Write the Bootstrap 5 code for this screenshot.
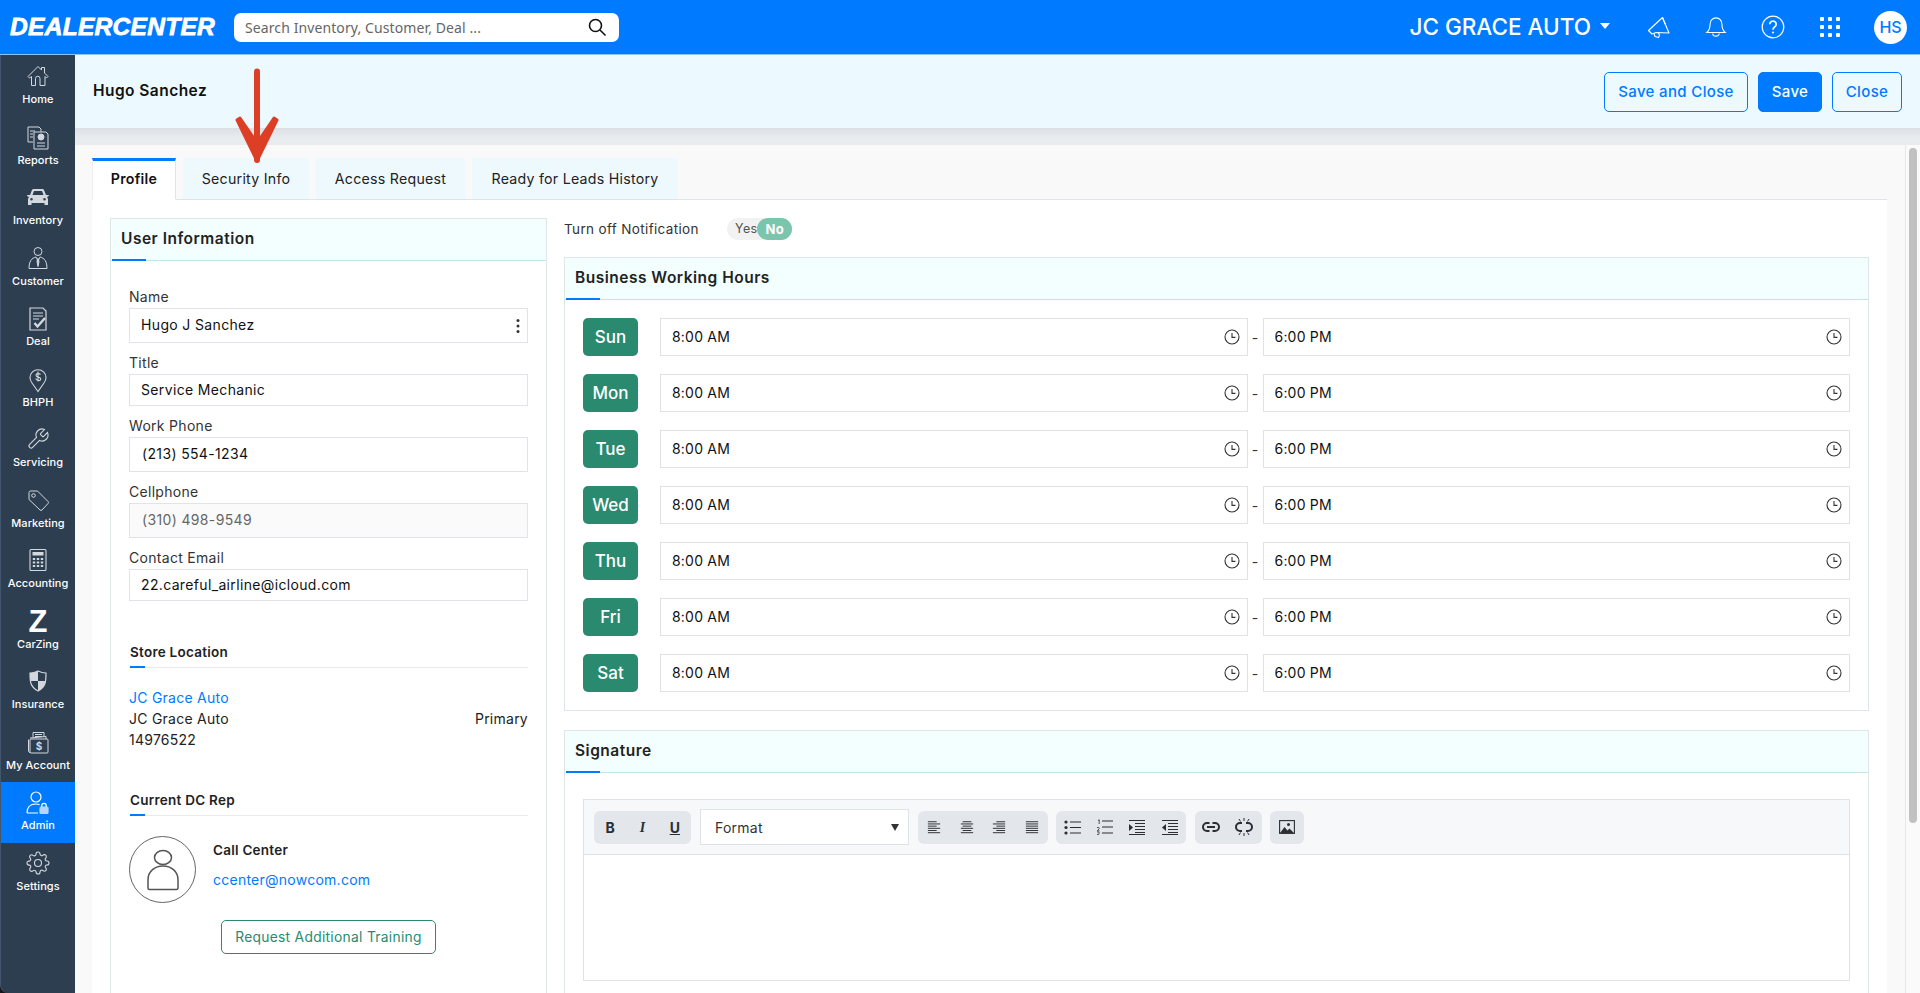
<!doctype html>
<html lang="en">
<head>
<meta charset="utf-8">
<meta name="viewport" content="width=device-width, initial-scale=1">
<title>DealerCenter - User Profile</title>
<link href="https://cdn.jsdelivr.net/npm/bootstrap@5.3.0/dist/css/bootstrap.min.css" rel="stylesheet">
<style>
  html, body { height: 100%; overflow: hidden; }
  body { font-family: Inter, "Noto Sans", sans-serif; font-size: 14px; letter-spacing: .25px; color: #222; background: #f9f9f9; }

  /* top bar */
  .top-bar { height: 55px; background: #007aff; border-bottom: 1px solid #8cc4ff; flex: none; padding: 0 13px 0 10px; }
  .brand-text { font-family: "Liberation Sans", sans-serif; font-weight: 700; font-style: italic; font-size: 24.5px; letter-spacing: .3px; color: #fff; width: 224px; -webkit-text-stroke: .8px #fff; padding: 0; margin: 0; }
  .brand-text:hover { color: #fff; }
  .top-search { width: 385px; height: 29px; background: #fff; border-radius: 7px; padding: 0 12px 0 11px; }
  .top-search span { font-family: "Noto Sans", sans-serif; font-size: 14px; letter-spacing: .1px; color: #666; }
  .store-name { font-size: 22.5px; font-weight: 500; letter-spacing: 0; color: #fff; margin-right: 9px; }
  .store-caret { width: 0; height: 0; border-left: 5px solid transparent; border-right: 5px solid transparent; border-top: 6px solid #fff; margin-right: 36px; margin-top: -3px; }
  .top-ico { width: 26px; display: flex; justify-content: center; color: #fff; margin-right: 31px; }
  .top-avatar { width: 33px; height: 33px; border-radius: 50%; background: #fff; color: #007aff; font-size: 16px; font-weight: 500; letter-spacing: 0; }

  /* side menu */
  .main-row { background: #15191e; }
  .side-menu { width: 75px; background: #2d3e50; border-left: 1px solid #42576d; border-bottom-left-radius: 8px; flex: none; padding-top: 1px; }
  .side-item { height: 60.5px; padding-top: 8px; color: #fff; text-decoration: none; font-size: 11px; font-weight: 500; letter-spacing: .05px; line-height: 14px; }
  .side-item:hover { color: #fff; }
  .side-item svg { color: #d3d8de; }
  .side-item.is-active { background: #007aff; }
  .side-item.is-active svg { color: #fff; }
  .side-ico { height: 26px; margin-bottom: 2px; }
  .zing-mark { font-size: 31px; font-weight: 900; line-height: 26px; color: #fff; font-family: "Liberation Sans", sans-serif; }

  /* title strip */
  .work-col { background: #f9f9f9; }
  .title-strip { height: 73px; background: #ecf9ff; padding: 0 18px 0 18px; flex: none; position: relative; z-index: 1; }
  .title-strip h1 { font-size: 15.5px; font-weight: 600; margin: 0; letter-spacing: .45px; color: #111; }
  .shade-strip { height: 17px; flex: none; background: linear-gradient(#dcdfe4, #e9ecef 60%); }
  .act-row { gap: 10px; }
  .act-btn { height: 40px; font-size: 15px; font-weight: 500; border-radius: 5px; padding: 1px 0 0; color: #007aff; border: 1px solid #007aff; letter-spacing: .35px; }
  .act-save-close { width: 144px; }
  .act-save { width: 64px; background: #007aff; color: #fff; }
  .act-close { width: 70px; }

  /* scrolling page */
  .page-scroll { flex: 1; overflow: hidden; padding: 13px 18px 16px 17px; }
  .scroll-rail { width: 15px; flex: none; background: #fafafa; border-left: 1px solid #e8e8e8; padding: 3px 3px 0 3px; }
  .scroll-thumb { height: 675px; background: #c1c1c1; border-radius: 4px; }

  .tab-row { border-bottom: 1px solid #e0e3e8; gap: 7px; }
  .tab-row .nav-link { height: 42px; margin-bottom: -1px; padding: 0 0 2px; border: 0; border-top: 3px solid transparent; border-radius: 0; background: #eef9fe; color: #222; font-size: 14.2px; border-bottom: 1px solid #e0e3e8; }
  .tab-row .nav-link.active { background: #fff; color: #111; font-weight: 600; border-top-color: #007aff; border-bottom-color: #fff; border-left: 1px solid #eee; border-right: 1px solid #e0e3e8; }
  .tab-profile { width: 84px; }
  .tab-security { width: 126px; }
  .tab-access { width: 149px; }
  .tab-leads { width: 206px; }
  .tab-body { background: #fff; padding: 18px 18px 15px 18px; }
  .profile-grid { display: grid; grid-template-columns: 437px 1fr; gap: 17px; }

  /* panels */
  .panel { border: 1px solid #dfe6e8; border-radius: 0; }
  .panel-head { height: 42px; background: #f3fffe; border-bottom: 1px solid #c3e6e2; padding: 0 0 1px 10px; font-size: 15.5px; font-weight: 600; letter-spacing: .5px; color: #222; position: relative; border-radius: 0 !important; }
  .panel-head::after { content: ""; position: absolute; left: 1px; bottom: -1px; width: 34px; height: 2px; background: #007aff; }
  .left-body { padding: 26px 18px 240px 18px; }

  .fld { margin-bottom: 10px; }
  .fld label { display: block; height: 20px; line-height: 20px; margin-bottom: 1px; font-size: 14px; color: #333; letter-spacing: .3px; }
  .fld-input { height: 35px; border-radius: 0; border: 1px solid #e0e3e8; color: #111; font-size: 14px; letter-spacing: .35px; padding: 0 11px 2px; }
  .fld-input.is-short { height: 32px; }
  .fld-input.is-phone { padding-left: 12px; }
  .fld-input:disabled { background: #fafafa; color: #666; opacity: 1; }
  .kebab { position: absolute; right: 8px; top: 50%; transform: translateY(-50%); }

  .sub-head { font-size: 13.5px; font-weight: 600; color: #222; height: 26px; line-height: 20px; border-bottom: 1px solid #e9ecef; position: relative; padding-left: 1px; }
  .sub-head::after { content: ""; position: absolute; left: 1px; bottom: -1px; width: 15px; height: 2px; background: #007aff; }
  .store-head { margin-top: 41px; }
  .store-block { margin: 19px 0 40px; line-height: 21px; font-size: 14px; color: #222; }
  .blue-link { color: #007aff; text-decoration: none; }
  .rep-block { margin-top: 20px; }
  .rep-photo { width: 67px; height: 67px; border: 1px solid #666; border-radius: 50%; flex: none; margin-right: 17px; color: #555; }
  .rep-name { font-size: 13.5px; font-weight: 600; margin: 5px 0 10px; line-height: 18px; }
  .rep-mail { font-size: 14px; line-height: 20px; }
  .train-btn { width: 215px; height: 34px; margin: 17px auto 0; padding: 0; display: block; font-size: 13.8px; color: #2a8a70; border: 1px solid #2a8a70; border-radius: 5px; letter-spacing: .3px; }

  .notify-row { height: 22px; margin-bottom: 17px; font-size: 13.5px; color: #333; letter-spacing: .35px; }
  .notify-row > span { width: 163px; }
  .yes-no { width: 65px; height: 22px; border-radius: 11px; background: #f2f2f2; font-size: 12.5px; color: #555; padding-left: 8px; }
  .yes-no b { width: 36px; height: 22px; border-radius: 11px; background: #7cc5ad; color: #fff; margin-left: auto; font-size: 13px; font-weight: 700; text-align: center; line-height: 22px; }

  .hours-body { padding: 18px 18px 0 18px; }
  .hours-row { margin-bottom: 18px; }
  .day-tag { width: 55px; height: 38px; flex: none; margin-right: 22px; padding-top: 1px; background: #2a8a70; color: #fff; border-radius: 5px; font-size: 17px; font-weight: 500; letter-spacing: 0; }
  .time-box { flex: 1; }
  .time-box .form-control { height: 38px; border-radius: 0; border: 1px solid #e2e2e2; padding: 0 11px 1px; font-size: 14px; color: #111; letter-spacing: .2px; }
  .time-clock { position: absolute; right: 8px; top: 11px; color: #333; }
  .time-dash { width: 15px; text-align: center; color: #333; }

  .sign-panel { margin-top: 19px; }
  .sign-body { padding: 26px 18px 20px 18px; }
  .edit-box { border: 1px solid #dfe2e6; height: 182px; }
  .edit-tools { height: 55px; background: #f7f8fa; border-bottom: 1px solid #dfe2e6; padding: 0 10px; }
  .tool-set { height: 33px; background: #e3e6ea; border-radius: 6px; color: #2a2f35; }
  .tool-set > span { width: 32.5px; text-align: center; display: flex; justify-content: center; align-items: center; font-size: 14px; font-weight: 700; letter-spacing: 0; }
  .set-a { width: 97px; margin-right: 9px; }
  .set-b { width: 130px; margin-right: 8px; }
  .set-c { width: 130px; margin-right: 9px; }
  .set-d { width: 67px; margin-right: 8px; }
  .set-e { width: 34px; }
  .fmt-select { width: 209px; height: 36px; background: #fff; border: 1px solid #dfe2e6; margin-right: 9px; padding: 0 9px 0 14px; font-size: 14px; color: #333; }
  .fmt-caret { width: 0; height: 0; border-left: 4.5px solid transparent; border-right: 4.5px solid transparent; border-top: 7px solid #333; }
  .ital-i { font-family: "Liberation Serif", serif; font-style: italic; font-size: 16px; font-weight: 400; }
  .under-u { text-decoration: underline; }

  /* annotation drawn on top of the screenshot */
  .note-arrow { position: absolute; left: 232px; top: 68px; z-index: 5; pointer-events: none; }
</style>
</head>
<body>
<svg width="0" height="0" class="position-absolute">
  <symbol id="i-clock" viewBox="0 0 16 16"><circle cx="8" cy="8" r="7" fill="none" stroke="currentColor" stroke-width="1.1"/><path d="M8 4v4.4h3.4" fill="none" stroke="currentColor" stroke-width="1.1"/></symbol>
  <symbol id="i-lines-l" viewBox="0 0 16 16"><path d="M1 2h10M1 4.500h14M1 7h10M1 9.500h14M1 12h10M1 14.500h14" stroke="currentColor" stroke-width="1.100" fill="none"/></symbol>
  <symbol id="i-lines-c" viewBox="0 0 16 16"><path d="M3 2h10M1 4.500h14M3 7h10M1 9.500h14M3 12h10M1 14.500h14" stroke="currentColor" stroke-width="1.100" fill="none"/></symbol>
  <symbol id="i-lines-r" viewBox="0 0 16 16"><path d="M5 2h10M1 4.500h14M5 7h10M1 9.500h14M5 12h10M1 14.500h14" stroke="currentColor" stroke-width="1.100" fill="none"/></symbol>
  <symbol id="i-lines-j" viewBox="0 0 16 16"><path d="M1 2h14M1 4.500h14M1 7h14M1 9.500h14M1 12h14M1 14.500h14" stroke="currentColor" stroke-width="1.100" fill="none"/></symbol>
</svg>

<div class="d-flex flex-column h-100">
  <!-- Top bar -->
  <nav class="navbar top-bar d-flex flex-nowrap align-items-center justify-content-start">
    <a class="navbar-brand brand-text" href="#">DEALERCENTER</a>
    <div class="top-search d-flex align-items-center justify-content-between">
      <span>Search Inventory, Customer, Deal ...</span>
      <svg width="20" height="20" viewBox="0 0 20 20" fill="none" stroke="#111" stroke-width="1.600"><circle cx="8.500" cy="8.500" r="6"/><path d="M13 13l5.500 5.500"/></svg>
    </div>
    <div class="ms-auto d-flex align-items-center">
      <span class="store-name">JC GRACE AUTO</span>
      <span class="store-caret"></span>
      <span class="top-ico"><svg width="24" height="24" viewBox="0 0 24 24" fill="none" stroke="currentColor" stroke-width="1.100" stroke-linejoin="round"><path d="M1.500 15.500L15.500 2.500 22 18 9 17.500 5 19z"/><path d="M15.500 2.500c1 3 2 5 3 7M7 18.500l1 3 3.500 1 1-2-1-3"/></svg></span>
      <span class="top-ico"><svg width="22" height="24" viewBox="0 0 24 24" fill="none" stroke="currentColor" stroke-width="1.200"><path d="M18.500 9A6.500 7 0 0 0 5.500 9c0 6-3.500 9-3.500 9h20s-3.500-3-3.500-9"/><path d="M8.500 19a3.500 3 0 0 0 7 0"/></svg></span>
      <span class="top-ico"><svg width="24" height="24" viewBox="0 0 24 24" fill="none" stroke="currentColor" stroke-width="1.200"><circle cx="12" cy="12" r="10.800"/><path d="M8.800 9.200a3.200 3.200 0 1 1 4.800 2.800c-1 .6-1.600 1.200-1.600 2.800" stroke-width="1.700"/><circle cx="12" cy="17.600" r="1" fill="currentColor" stroke="none"/></svg></span>
      <span class="top-ico"><svg width="22" height="22" viewBox="0 0 22 22" fill="currentColor"><rect x="1" y="1" width="4" height="4" rx="1"/><rect x="9" y="1" width="4" height="4" rx="1"/><rect x="17" y="1" width="4" height="4" rx="1"/><rect x="1" y="9" width="4" height="4" rx="1"/><rect x="9" y="9" width="4" height="4" rx="1"/><rect x="17" y="9" width="4" height="4" rx="1"/><rect x="1" y="17" width="4" height="4" rx="1"/><rect x="9" y="17" width="4" height="4" rx="1"/><rect x="17" y="17" width="4" height="4" rx="1"/></svg></span>
      <span class="top-avatar d-flex align-items-center justify-content-center">HS</span>
    </div>
  </nav>

  <div class="main-row d-flex flex-grow-1 overflow-hidden position-relative">
    <!-- Side menu -->
    <div class="side-menu">
      <a class="side-item d-flex flex-column align-items-center" href="#"><span class="side-ico"><svg width="24" height="24" viewBox="0 0 24 24" fill="none" stroke="currentColor" stroke-width="1"><path d="M2 12.500L12 2.500l3.500 3.500V3.500h3V9l3.500 3.500-1.500 1.500-1.500-1.500V21.500h-5v-7a2 2 0 0 0-4.500 0v7H5.500V12.500L3.500 14z"/></svg></span>Home</a>
      <a class="side-item d-flex flex-column align-items-center" href="#"><span class="side-ico"><svg width="24" height="26" viewBox="0 0 24 26" fill="none" stroke="currentColor" stroke-width="1"><path d="M2 2h11l2 2v3M2 2v15h5"/><path d="M4 6h5M4 9h3M4 12h3" stroke-width="1.100"/><path d="M8 7h12l2 2v15H8z"/><circle cx="15" cy="12" r="3" fill="currentColor"/><path d="M11 18h8M11 21h8"/></svg></span>Reports</a>
      <a class="side-item d-flex flex-column align-items-center" href="#"><span class="side-ico"><svg width="26" height="24" viewBox="0 0 26 24"><path fill="currentColor" d="M5 10l2-5c.3-.7 1-1 1.600-1h8.800c.6 0 1.300.3 1.600 1l2 5h2.500c.5 0 .5 1-.1 1.300L22 12c.6.7 1 1.500 1 2.500V20h-3.500v-2h-13v2H3v-5.500c0-1 .4-1.800 1-2.500l-1.500-.7c-.6-.3-.6-1.300-.1-1.300zm2.500 0h11L17 6H9zM6.500 13a1.300 1.300 0 1 0 0 2.600 1.300 1.300 0 0 0 0-2.600zm13 0a1.300 1.300 0 1 0 0 2.600 1.300 1.300 0 0 0 0-2.600z"/></svg></span>Inventory</a>
      <a class="side-item d-flex flex-column align-items-center" href="#"><span class="side-ico"><svg width="24" height="24" viewBox="0 0 24 24" fill="none" stroke="currentColor" stroke-width="1"><circle cx="12" cy="5.500" r="4"/><path d="M3 22.500c0-7 2.500-10.500 7-11.500l2 4 2-4c4.500 1 7 4.500 7 11.500z"/><path d="M12 12.500l-1 3 1 5 1-5z" fill="currentColor"/></svg></span>Customer</a>
      <a class="side-item d-flex flex-column align-items-center" href="#"><span class="side-ico"><svg width="22" height="26" viewBox="0 0 22 26" fill="none" stroke="currentColor" stroke-width="1.200"><path d="M3 2h13l3 3v19H3z"/><path d="M6 7h10M6 10h10M6 13h6" stroke-width="1"/><path d="M7.500 17l3 3.500L18 12" stroke-width="2.400"/></svg></span>Deal</a>
      <a class="side-item d-flex flex-column align-items-center" href="#"><span class="side-ico"><svg width="24" height="26" viewBox="0 0 24 26" fill="none" stroke="currentColor" stroke-width="1.100"><path d="M12 24.500L6 16a8 8 0 1 1 12 0z"/><path d="M14.500 7.500c-.5-1-4.500-1.500-4.500.8 0 2.400 4.700 1.200 4.700 3.700 0 2.300-4.200 2-5-.7M12 4.500v10"/></svg></span>BHPH</a>
      <a class="side-item d-flex flex-column align-items-center" href="#"><span class="side-ico"><svg width="24" height="24" viewBox="0 0 24 24" fill="none" stroke="currentColor" stroke-width="1.100"><path d="M14.700 6.300a1 1 0 0 0 0 1.400l1.600 1.600a1 1 0 0 0 1.400 0l3.770-3.770a6 6 0 0 1-7.940 7.940l-6.910 6.910a2.120 2.120 0 0 1-3-3l6.910-6.910a6 6 0 0 1 7.940-7.940l-3.760 3.760z"/></svg></span>Servicing</a>
      <a class="side-item d-flex flex-column align-items-center" href="#"><span class="side-ico"><svg width="24" height="24" viewBox="0 0 24 24" fill="none" stroke="currentColor" stroke-width="1"><path d="M22 15.500l-6 6.500a1.500 1.500 0 0 1-2 0L3 11.500V4.500A1.500 1.500 0 0 1 4.500 3h7L22 13.500a1.500 1.500 0 0 1 0 2z"/><circle cx="7.500" cy="7.500" r="1.800"/></svg></span>Marketing</a>
      <a class="side-item d-flex flex-column align-items-center" href="#"><span class="side-ico"><svg width="20" height="24" viewBox="0 0 20 24" fill="none" stroke="currentColor" stroke-width="1.100"><rect x="2" y="1.500" width="16" height="21" rx="1"/><rect x="4.500" y="4" width="11" height="3.500" fill="currentColor" stroke="none"/><path d="M4.800 11h2.400M8.800 11h2.400M12.800 11h2.400M4.800 14.500h2.400M8.800 14.500h2.400M12.800 14.500h2.400M4.800 18h2.400M8.800 18h2.400M12.800 18h2.400" stroke-width="2"/></svg></span>Accounting</a>
      <a class="side-item d-flex flex-column align-items-center" href="#"><span class="side-ico zing-mark">Z</span>CarZing</a>
      <a class="side-item d-flex flex-column align-items-center" href="#"><span class="side-ico"><svg width="20" height="24" viewBox="0 0 20 24"><path d="M10 2c3 1.500 5.500 2 8 2 0 8 0 14-8 18-8-4-8-10-8-18 2.500 0 5-.5 8-2z" fill="none" stroke="currentColor" stroke-width="1.200"/><path d="M10 2c-3 1.500-5.500 2-8 2 0 3 0 5.500.5 8H10zM10 12v10c4.500-2.200 6.700-5.800 7.500-10z" fill="currentColor"/></svg></span>Insurance</a>
      <a class="side-item d-flex flex-column align-items-center" href="#"><span class="side-ico"><svg width="24" height="24" viewBox="0 0 24 24" fill="none" stroke="currentColor" stroke-width="1"><path d="M7 7V2.500h11V7M9 4.500h7M9 6.500h7"/><path d="M4 8l16-1.500V9"/><rect x="4" y="9" width="18" height="14" rx="1"/><path d="M2.500 9.500v11.500l1.500 2"/><text x="13" y="20" font-size="10" font-weight="700" fill="currentColor" stroke="none" text-anchor="middle">$</text></svg></span>My Account</a>
      <a class="side-item is-active d-flex flex-column align-items-center" href="#"><span class="side-ico"><svg width="26" height="26" viewBox="0 0 26 26" fill="none" stroke="currentColor" stroke-width="1.200"><circle cx="11" cy="7" r="5"/><path d="M2 23c0-6 3-9 9-9 1.500 0 2.500.2 3.500.6M2 23h11"/><rect x="15" y="17" width="8" height="6.500" rx="1" fill="currentColor" opacity=".7"/><path d="M16.800 17v-1.500a2.200 2.200 0 0 1 4.400 0V17"/></svg></span>Admin</a>
      <a class="side-item d-flex flex-column align-items-center" href="#"><span class="side-ico"><svg width="24" height="24" viewBox="0 0 24 24" fill="none" stroke="currentColor" stroke-width="1.100"><circle cx="12" cy="12" r="3.500"/><path d="M19.400 15a1.650 1.650 0 0 0 .33 1.820l.06.06a2 2 0 0 1 0 2.830 2 2 0 0 1-2.830 0l-.06-.06a1.650 1.650 0 0 0-1.820-.33 1.650 1.650 0 0 0-1 1.510V21a2 2 0 0 1-2 2 2 2 0 0 1-2-2v-.09A1.650 1.650 0 0 0 9 19.400a1.650 1.650 0 0 0-1.820.33l-.06.06a2 2 0 0 1-2.830 0 2 2 0 0 1 0-2.830l.06-.06a1.650 1.650 0 0 0 .33-1.820 1.650 1.650 0 0 0-1.510-1H3a2 2 0 0 1-2-2 2 2 0 0 1 2-2h.09A1.650 1.650 0 0 0 4.600 9a1.650 1.650 0 0 0-.33-1.820l-.06-.06a2 2 0 0 1 0-2.830 2 2 0 0 1 2.830 0l.06.06a1.650 1.650 0 0 0 1.820.33H9a1.650 1.650 0 0 0 1-1.510V3a2 2 0 0 1 2-2 2 2 0 0 1 2 2v.09a1.650 1.650 0 0 0 1 1.510 1.650 1.650 0 0 0 1.820-.33l.06-.06a2 2 0 0 1 2.830 0 2 2 0 0 1 0 2.830l-.06.06a1.650 1.650 0 0 0-.33 1.820V9a1.650 1.650 0 0 0 1.510 1H21a2 2 0 0 1 2 2 2 2 0 0 1-2 2h-.09a1.650 1.650 0 0 0-1.510 1z"/></svg></span>Settings</a>
    </div>

    <!-- Main -->
    <div class="work-col d-flex flex-column flex-grow-1 overflow-hidden">
      <div class="title-strip d-flex align-items-center justify-content-between">
        <h1>Hugo Sanchez</h1>
        <div class="act-row d-flex">
          <button class="btn act-btn act-save-close">Save and Close</button>
          <button class="btn act-btn act-save">Save</button>
          <button class="btn act-btn act-close">Close</button>
        </div>
      </div>
      <div class="shade-strip"></div>

      <div class="d-flex flex-grow-1 overflow-hidden">
      <div class="page-scroll">
        <ul class="nav tab-row">
          <li class="nav-item"><a class="nav-link active tab-profile d-flex align-items-center justify-content-center" href="#">Profile</a></li>
          <li class="nav-item"><a class="nav-link tab-security d-flex align-items-center justify-content-center" href="#">Security Info</a></li>
          <li class="nav-item"><a class="nav-link tab-access d-flex align-items-center justify-content-center" href="#">Access Request</a></li>
          <li class="nav-item"><a class="nav-link tab-leads d-flex align-items-center justify-content-center" href="#">Ready for Leads History</a></li>
        </ul>

        <div class="tab-body">
          <div class="profile-grid">
            <!-- Left column -->
            <div class="card panel">
              <div class="card-header panel-head d-flex align-items-center">User Information</div>
              <div class="left-body">
                <div class="fld"><label>Name</label>
                  <div class="position-relative"><input class="form-control fld-input" value="Hugo J Sanchez">
                    <svg class="kebab" width="4" height="15" viewBox="0 0 4 15" fill="#333"><circle cx="2" cy="2" r="1.500"/><circle cx="2" cy="7.500" r="1.500"/><circle cx="2" cy="13" r="1.500"/></svg>
                  </div>
                </div>
                <div class="fld"><label>Title</label><input class="form-control fld-input is-short" value="Service Mechanic"></div>
                <div class="fld"><label>Work Phone</label><input class="form-control fld-input is-phone" value="(213) 554-1234"></div>
                <div class="fld"><label>Cellphone</label><input class="form-control fld-input is-phone" value="(310) 498-9549" disabled></div>
                <div class="fld"><label>Contact Email</label><input class="form-control fld-input is-short" value="22.careful_airline@icloud.com"></div>

                <div class="sub-head store-head">Store Location</div>
                <div class="store-block">
                  <a class="blue-link d-block" href="#">JC Grace Auto</a>
                  <div class="d-flex justify-content-between"><span>JC Grace Auto</span><span>Primary</span></div>
                  <div>14976522</div>
                </div>

                <div class="sub-head">Current DC Rep</div>
                <div class="rep-block d-flex">
                  <div class="rep-photo d-flex align-items-center justify-content-center">
                    <svg width="34" height="42" viewBox="0 0 34 42" fill="none" stroke="currentColor" stroke-width="1.500"><ellipse cx="17" cy="8.500" rx="8.500" ry="7"/><path d="M2 39V31C2 22 9 17 17 17s15 5 15 14v8c0 1-.5 1.500-1.500 1.500h-27C2.500 40.500 2 40 2 39z"/></svg>
                  </div>
                  <div>
                    <div class="rep-name">Call Center</div>
                    <a class="blue-link rep-mail" href="#">ccenter@nowcom.com</a>
                  </div>
                </div>
                <button class="btn train-btn">Request Additional Training</button>
              </div>
            </div>

            <!-- Right column -->
            <div>
              <div class="notify-row d-flex align-items-center">
                <span>Turn off Notification</span>
                <div class="yes-no d-flex align-items-center">Yes<b>No</b></div>
              </div>

              <div class="card panel">
                <div class="card-header panel-head d-flex align-items-center">Business Working Hours</div>
                <div class="hours-body">
                  <div class="hours-row d-flex align-items-center"><div class="day-tag d-flex align-items-center justify-content-center">Sun</div><div class="time-box position-relative"><input class="form-control" value="8:00 AM"><svg class="time-clock" width="16" height="16"><use href="#i-clock"/></svg></div><span class="time-dash">-</span><div class="time-box position-relative"><input class="form-control" value="6:00 PM"><svg class="time-clock" width="16" height="16"><use href="#i-clock"/></svg></div></div>
                  <div class="hours-row d-flex align-items-center"><div class="day-tag d-flex align-items-center justify-content-center">Mon</div><div class="time-box position-relative"><input class="form-control" value="8:00 AM"><svg class="time-clock" width="16" height="16"><use href="#i-clock"/></svg></div><span class="time-dash">-</span><div class="time-box position-relative"><input class="form-control" value="6:00 PM"><svg class="time-clock" width="16" height="16"><use href="#i-clock"/></svg></div></div>
                  <div class="hours-row d-flex align-items-center"><div class="day-tag d-flex align-items-center justify-content-center">Tue</div><div class="time-box position-relative"><input class="form-control" value="8:00 AM"><svg class="time-clock" width="16" height="16"><use href="#i-clock"/></svg></div><span class="time-dash">-</span><div class="time-box position-relative"><input class="form-control" value="6:00 PM"><svg class="time-clock" width="16" height="16"><use href="#i-clock"/></svg></div></div>
                  <div class="hours-row d-flex align-items-center"><div class="day-tag d-flex align-items-center justify-content-center">Wed</div><div class="time-box position-relative"><input class="form-control" value="8:00 AM"><svg class="time-clock" width="16" height="16"><use href="#i-clock"/></svg></div><span class="time-dash">-</span><div class="time-box position-relative"><input class="form-control" value="6:00 PM"><svg class="time-clock" width="16" height="16"><use href="#i-clock"/></svg></div></div>
                  <div class="hours-row d-flex align-items-center"><div class="day-tag d-flex align-items-center justify-content-center">Thu</div><div class="time-box position-relative"><input class="form-control" value="8:00 AM"><svg class="time-clock" width="16" height="16"><use href="#i-clock"/></svg></div><span class="time-dash">-</span><div class="time-box position-relative"><input class="form-control" value="6:00 PM"><svg class="time-clock" width="16" height="16"><use href="#i-clock"/></svg></div></div>
                  <div class="hours-row d-flex align-items-center"><div class="day-tag d-flex align-items-center justify-content-center">Fri</div><div class="time-box position-relative"><input class="form-control" value="8:00 AM"><svg class="time-clock" width="16" height="16"><use href="#i-clock"/></svg></div><span class="time-dash">-</span><div class="time-box position-relative"><input class="form-control" value="6:00 PM"><svg class="time-clock" width="16" height="16"><use href="#i-clock"/></svg></div></div>
                  <div class="hours-row d-flex align-items-center"><div class="day-tag d-flex align-items-center justify-content-center">Sat</div><div class="time-box position-relative"><input class="form-control" value="8:00 AM"><svg class="time-clock" width="16" height="16"><use href="#i-clock"/></svg></div><span class="time-dash">-</span><div class="time-box position-relative"><input class="form-control" value="6:00 PM"><svg class="time-clock" width="16" height="16"><use href="#i-clock"/></svg></div></div>
                </div>
              </div>

              <div class="card panel sign-panel">
                <div class="card-header panel-head d-flex align-items-center">Signature</div>
                <div class="sign-body">
                  <div class="edit-box">
                    <div class="edit-tools d-flex align-items-center">
                      <div class="tool-set set-a d-flex align-items-center"><span>B</span><span class="ital-i">I</span><span class="under-u">U</span></div>
                      <div class="fmt-select d-flex align-items-center justify-content-between"><span>Format</span><i class="fmt-caret"></i></div>
                      <div class="tool-set set-b d-flex align-items-center">
                        <span><svg width="14" height="14"><use href="#i-lines-l"/></svg></span><span><svg width="14" height="14"><use href="#i-lines-c"/></svg></span><span><svg width="14" height="14"><use href="#i-lines-r"/></svg></span><span><svg width="14" height="14"><use href="#i-lines-j"/></svg></span>
                      </div>
                      <div class="tool-set set-c d-flex align-items-center">
                        <span><svg width="17" height="15" viewBox="0 0 17 15" fill="currentColor"><circle cx="2" cy="2" r="1.600"/><circle cx="2" cy="7.500" r="1.600"/><circle cx="2" cy="13" r="1.600"/><path d="M6 2h11M6 7.500h11M6 13h11" stroke="currentColor" stroke-width="1.100"/></svg></span>
                        <span><svg width="17" height="16" viewBox="0 0 17 16" fill="none" stroke="currentColor"><path d="M2 1.500l1.200-.7V5M1 8.500h1.300q1.200 0 .9 1.200L1.200 12h2.300M1.200 13h1.600q.8.500 0 1.200.8.500 0 1.200H1" stroke-width=".8"/><path d="M6 2h11M6 8h11M6 14h11" stroke-width="1.100"/></svg></span>
                        <span><svg width="16" height="15" viewBox="0 0 16 15" fill="currentColor"><path d="M0 .5h16M6 3.500h10M6 6.500h10M6 9.500h10M6 12.500h10M0 14.500h16" stroke="currentColor" fill="none" stroke-width="1.100"/><path d="M0 4l4 3.500L0 11z"/></svg></span>
                        <span><svg width="16" height="15" viewBox="0 0 16 15" fill="currentColor"><path d="M0 .5h16M6 3.500h10M6 6.500h10M6 9.500h10M6 12.500h10M0 14.500h16" stroke="currentColor" fill="none" stroke-width="1.100"/><path d="M4 4L0 7.500 4 11z"/></svg></span>
                      </div>
                      <div class="tool-set set-d d-flex align-items-center">
                        <span><svg width="18" height="12" viewBox="0 0 18 12" fill="none" stroke="currentColor" stroke-width="2"><path d="M7.500 2H5a4 4 0 0 0 0 8h2.500M10.500 2H13a4 4 0 0 1 0 8h-2.500M5 6h8"/></svg></span>
                        <span><svg width="18" height="18" viewBox="0 0 18 18" fill="none" stroke="currentColor"><path d="M7 5H5a4 4 0 0 0 0 8h2M11 5h2a4 4 0 0 1 0 8h-2" stroke-width="2"/><path d="M9 0v3M9 15v3M4 1l1.500 2.500M14 1l-1.500 2.500M4 17l1.500-2.500M14 17l-1.500-2.500" stroke-width="1"/></svg></span>
                      </div>
                      <div class="tool-set set-e d-flex align-items-center">
                        <span class="w-100"><svg width="16" height="14" viewBox="0 0 16 14"><rect x=".6" y=".6" width="14.800" height="12.800" fill="none" stroke="currentColor" stroke-width="1.100"/><path d="M1 13l4.500-6 3 3.500 2-2L15 13z" fill="currentColor"/><circle cx="9.500" cy="4.500" r="1.500" fill="currentColor"/></svg></span>
                      </div>
                    </div>
                  </div>
                </div>
              </div>
            </div>
          </div>
        </div>
      </div>
      <div class="scroll-rail"><div class="scroll-thumb"></div></div>
      </div>
    </div>
  </div>
</div>

<!-- red arrow from the original picture -->
<svg class="note-arrow" width="50" height="98" viewBox="0 0 50 98"><path d="M25 3.500V92" stroke="#dc3f26" stroke-width="6" stroke-linecap="round"/><path d="M5 52L25 93 45 52 42 50 25 75 8 50z" fill="#dc3f26" stroke="#dc3f26" stroke-width="3" stroke-linejoin="round"/></svg>

<script src="https://cdn.jsdelivr.net/npm/bootstrap@5.3.0/dist/js/bootstrap.bundle.min.js"></script>
</body>
</html>
